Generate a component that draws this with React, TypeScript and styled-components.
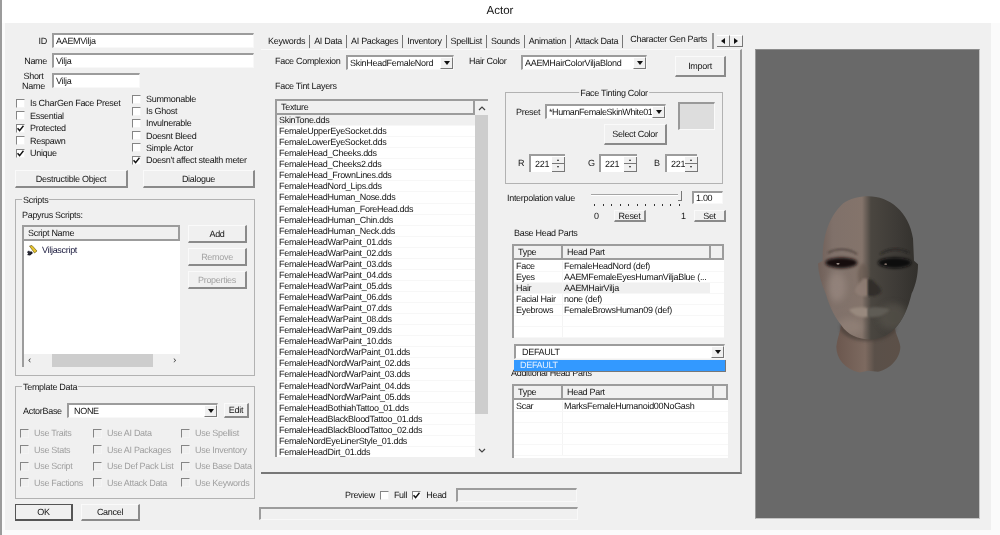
import React from "react";
import styled, {createGlobalStyle} from "styled-components";

const GlobalStyle = createGlobalStyle`
  html, body {
    margin: 0;
    background: #fff;
  }
  * {
    box-sizing: border-box;
  }
`;

const Window = styled.div`
  width: 1000px;
  height: 535px;
  overflow: hidden;
  background: #fbfbfb;
  border-left: 2px solid #9b9b9b;
  color: #161616;
  font-family: "Liberation Sans", Arial, sans-serif;
  font-size: 9px;
  line-height: 10px;
  letter-spacing: -0.3px;
  text-rendering: geometricPrecision;
  filter: blur(0.3px);
`;

const TitleBar = styled.div`
  height: 23px;
  margin-left: -2px;
  text-align: center;
  font-size: 11.5px;
  letter-spacing: 0;
  line-height: 23px;
  background: #fff;
`;

const Dialog = styled.div`
  display: flex;
  width: 986px;
  height: 507px;
  margin-left: 3px;
  padding: 10px 0 0 10px;
  background: #f0f0f0;
`;

const LeftColumn = styled.div`
  flex: none;
  width: 240px;
`;

const Row = styled.div<{$h?: number; $mt?: number; $pl?: number}>`
  display: flex;
  align-items: center;
  height: ${(p) => p.$h ?? 15}px;
  margin-top: ${(p) => p.$mt ?? 0}px;
  padding-left: ${(p) => p.$pl ?? 0}px;
`;

const FieldLabel = styled.div<{$w?: number; $right?: boolean; $center?: boolean}>`
  flex: none;
  width: ${(p) => (p.$w ? `${p.$w}px` : "auto")};
  padding-right: ${(p) => (p.$right ? 5 : 0)}px;
  text-align: ${(p) => (p.$center ? "center" : p.$right ? "right" : "left")};
`;

const Sunken = styled.div<{$w: number; $h?: number; $ml?: number; $blank?: boolean}>`
  flex: none;
  width: ${(p) => p.$w}px;
  height: ${(p) => p.$h ?? 15}px;
  margin-left: ${(p) => p.$ml ?? 0}px;
  padding: 0 0 1px 2px;
  display: flex;
  align-items: center;
  overflow: hidden;
  white-space: nowrap;
  background: ${(p) => (p.$blank ? "#f0f0f0" : "#fff")};
  border-top: 2px solid #9c9c9c;
  border-left: 2px solid #9c9c9c;
  border-right: 1px solid #f8f8f8;
  border-bottom: 1px solid #f8f8f8;
`;

const ComboText = styled.span<{$pl?: number; $tight?: boolean}>`
  flex: 1;
  overflow: hidden;
  padding-left: ${(p) => p.$pl ?? 0}px;
  letter-spacing: ${(p) => (p.$tight ? "-0.42px" : "inherit")};
`;

const ComboArrowButton = styled.span`
  flex: none;
  display: flex;
  align-items: center;
  justify-content: center;
  width: 13px;
  height: 12px;
  background: #f0f0f0;
  border-top: 1px solid #fff;
  border-left: 1px solid #fff;
  border-right: 1px solid #777;
  border-bottom: 1px solid #777;

  &::after {
    content: "";
    border-top: 4px solid #111;
    border-left: 3.5px solid transparent;
    border-right: 3.5px solid transparent;
  }
`;

const CheckColumns = styled.div`
  display: flex;
  height: 77px;
  margin-top: 5px;
`;

const CheckColumn = styled.div<{$w: number; $pt: number; $pl: number; $step: number}>`
  flex: none;
  width: ${(p) => p.$w}px;
  padding: ${(p) => p.$pt}px 0 0 ${(p) => p.$pl}px;

  & > label {
    height: ${(p) => p.$step}px;
  }
`;

const CheckLabel = styled.label<{$off?: boolean}>`
  display: flex;
  align-items: center;
  gap: 5px;
  white-space: nowrap;
  color: ${(p) => (p.$off ? "#9f9f9f" : "inherit")};
`;

const Box = styled.span<{$off?: boolean}>`
  flex: none;
  display: block;
  width: 9px;
  height: 9px;
  background: ${(p) => (p.$off ? "#f0f0f0" : "#fff")};
  border-top: 1px solid #858585;
  border-left: 1px solid #858585;
  border-right: 1px solid #f4f4f4;
  border-bottom: 1px solid #f4f4f4;

  svg {
    display: block;
  }
`;

const Check: React.FC<{label: string; on?: boolean; off?: boolean}> = ({label, on, off}) => (
  <CheckLabel $off={off}>
    <Box $off={off}>
      {on && (
        <svg width="7" height="7" viewBox="0 0 7 7">
          <path d="M0.5 3.2 L2.6 5.6 L6.5 0.8" fill="none" stroke="#111" strokeWidth="1.5" />
        </svg>
      )}
    </Box>
    {label}
  </CheckLabel>
);

const Button = styled.div<{$w: number; $h?: number; $ml?: number; $mt?: number; $off?: boolean; $default?: boolean}>`
  flex: none;
  display: flex;
  align-items: center;
  justify-content: center;
  width: ${(p) => p.$w}px;
  height: ${(p) => p.$h ?? 18}px;
  margin-left: ${(p) => p.$ml ?? 0}px;
  margin-top: ${(p) => p.$mt ?? 0}px;
  color: ${(p) => (p.$off ? "#a3a3a3" : "inherit")};
  background: #f0f0f0;
  border-top: 1px solid ${(p) => (p.$default ? "#555" : "#fafafa")};
  border-left: 1px solid ${(p) => (p.$default ? "#555" : "#fafafa")};
  border-right: 2px solid ${(p) => (p.$default ? "#555" : "#8a8a8a")};
  border-bottom: 2px solid ${(p) => (p.$default ? "#555" : "#8a8a8a")};
`;

const Group = styled.div<{$w?: number; $h: number; $mt: number; $pl: number; $pt: number}>`
  position: relative;
  width: ${(p) => p.$w ?? 240}px;
  height: ${(p) => p.$h}px;
  margin-top: ${(p) => p.$mt}px;
  padding: ${(p) => p.$pt}px 0 0 ${(p) => p.$pl}px;
  border: 1px solid #b2b2b2;
`;

const Legend = styled.div<{$center?: boolean}>`
  position: absolute;
  top: -5px;
  left: ${(p) => (p.$center ? "50%" : "6px")};
  transform: ${(p) => (p.$center ? "translateX(-50%)" : "none")};
  padding: 0 1px;
  white-space: nowrap;
  background: #f0f0f0;
`;

const ScriptsBody = styled.div`
  display: flex;
  gap: 8px;
  margin-top: 5px;
`;

const ScriptList = styled.div`
  display: flex;
  flex-direction: column;
  width: 158px;
  height: 142px;
  background: #fff;
  border-top: 2px solid #9c9c9c;
  border-left: 2px solid #9c9c9c;
`;

const ScriptHeader = styled.div`
  flex: none;
  display: flex;
`;

const HeaderCell = styled.div<{$w?: number; $pl?: number}>`
  flex: ${(p) => (p.$w ? "none" : 1)};
  width: ${(p) => (p.$w ? `${p.$w}px` : "auto")};
  height: 14px;
  padding-left: ${(p) => p.$pl ?? 4}px;
  line-height: 12px;
  background: #f0f0f0;
  border-right: 2px solid #9c9c9c;
  border-bottom: 2px solid #9c9c9c;
`;

const ScriptRows = styled.div`
  flex: 1;
  padding: 3px 0 0 2px;
`;

const ScriptRow = styled.div`
  display: flex;
  align-items: center;
  gap: 4px;
  height: 12px;
  color: #16163a;
`;

const HScroll = styled.div`
  flex: none;
  display: flex;
  align-items: center;
  justify-content: space-between;
  height: 13px;
  padding: 0 4px;
  background: #f0f0f0;
  color: #333;
  font-size: 10px;
`;

const HThumb = styled.div`
  width: 101px;
  height: 13px;
  margin-left: 1px;
  background: #cdcdcd;
`;

const SideButtons = styled.div`
  display: flex;
  flex-direction: column;
  gap: 5px;
`;

const TemplateGrid = styled.div`
  display: grid;
  grid-template-columns: 73px 88px 1fr;
  grid-auto-rows: 16.5px;
  align-items: center;
  margin-top: 7px;
`;

const MidColumn = styled.div`
  flex: none;
  width: 483px;
  margin-left: 4px;
`;

const TabStrip = styled.div`
  display: flex;
  align-items: center;
  height: 16px;
  padding-left: 5px;
`;

const Tab = styled.div`
  height: 13px;
  padding: 0 4px;
  margin-top: 1px;
  line-height: 13px;
  white-space: nowrap;
  border-right: 1px solid #777;
`;

const ActiveTab = styled.div`
  height: 16px;
  padding: 0 5px 0 3px;
  margin-left: 4px;
  line-height: 13px;
  white-space: nowrap;
  border-right: 2px solid #999;
`;

const ArrowPair = styled.div`
  display: flex;
  margin-left: 3px;
`;

const ArrowButton = styled.div<{$left?: boolean}>`
  display: flex;
  align-items: center;
  justify-content: center;
  width: 13px;
  height: 12px;
  background: #f0f0f0;
  border-right: 1px solid #777;
  border-bottom: 1px solid #777;
  border-top: 1px solid #fff;

  &::after {
    content: "";
    border-top: 3px solid transparent;
    border-bottom: 3px solid transparent;
    ${(p) => (p.$left ? "border-right: 4px solid #111;" : "border-left: 4px solid #111;")}
  }
`;

const TabPanel = styled.div`
  width: 481px;
  height: 425px;
  margin-left: 2px;
  padding: 5px 0 0 14px;
  border-top: 1px solid #fafafa;
  border-right: 2px solid #999;
  border-bottom: 2px solid #777;
`;

const TopFields = styled.div`
  display: flex;
  align-items: flex-start;
  height: 26px;
`;

const TopLabel = styled.div<{$w: number; $ml?: number}>`
  flex: none;
  width: ${(p) => p.$w}px;
  margin-left: ${(p) => p.$ml ?? 0}px;
  line-height: 13px;
  white-space: nowrap;
`;

const PanelBody = styled.div`
  display: flex;
`;

const TintColumn = styled.div`
  flex: none;
  width: 213px;
`;

const TintTitle = styled.div`
  height: 18px;
`;

const TintList = styled.div`
  display: flex;
  width: 213px;
  height: 358px;
  background: #fff;
  border-top: 2px solid #9c9c9c;
  border-left: 2px solid #9c9c9c;
`;

const TintRows = styled.div`
  flex: 1;
  overflow: hidden;
`;

const TintRow = styled.div<{$selected?: boolean}>`
  height: 11.07px;
  padding-left: 2px;
  line-height: 10px;
  white-space: nowrap;
  background: ${(p) => (p.$selected ? "#f0f0f0" : "#fff")};
  border-bottom: 1px solid #f7f7f7;
`;

const VScroll = styled.div`
  flex: none;
  display: flex;
  flex-direction: column;
  width: 13px;
  background: #f0f0f0;
`;

const VArrow = styled.div`
  flex: none;
  height: 14px;
  display: flex;
  align-items: center;
  justify-content: center;
`;

const VThumb = styled.div`
  width: 13px;
  height: 299px;
  background: #cdcdcd;
`;

const VTrack = styled.div`
  flex: 1;
`;

const RightColumn = styled.div`
  position: relative;
  flex: none;
  width: 221px;
  margin-left: 17px;
  padding-top: 11px;
`;

const ColorTop = styled.div`
  display: flex;
  align-items: flex-start;
`;

const PresetArea = styled.div`
  flex: none;
  width: 150px;
  padding-top: 2px;
`;

const Swatch = styled.div`
  flex: none;
  width: 37px;
  height: 28px;
  margin-left: 12px;
  background: #dddddd;
  border-top: 2px solid #999;
  border-left: 2px solid #999;
  border-right: 1px solid #fafafa;
  border-bottom: 1px solid #fafafa;
`;

const RgbRow = styled.div`
  display: flex;
  align-items: center;
  height: 18px;
  margin-top: 9px;
  padding-left: 2px;
`;

const RgbLabel = styled.div<{$ml?: number}>`
  flex: none;
  width: 11px;
  margin-left: ${(p) => p.$ml ?? 0}px;
`;

const Spinner = styled.div<{$w: number}>`
  flex: none;
  display: flex;
  align-items: center;
  width: ${(p) => p.$w}px;
  height: 18px;
  padding-left: 4px;
  background: #fff;
  border-top: 2px solid #9c9c9c;
  border-left: 2px solid #9c9c9c;
`;

const SpinValue = styled.div`
  flex: 1;
`;

const SpinButtons = styled.div`
  flex: none;
  display: flex;
  flex-direction: column;
  width: 13px;
  height: 15px;
`;

const SpinButton = styled.div<{$down?: boolean}>`
  flex: 1;
  display: flex;
  align-items: center;
  justify-content: center;
  background: #f0f0f0;
  border-right: 1px solid #777;
  border-bottom: 1px solid #777;

  &::after {
    content: "";
    border-left: 1.5px solid transparent;
    border-right: 1.5px solid transparent;
    ${(p) => (p.$down ? "border-top: 2px solid #222;" : "border-bottom: 2px solid #222;")}
  }
`;

const InterpRow = styled.div`
  display: flex;
  height: 16px;
  margin-top: 7px;
  padding-left: 2px;
`;

const InterpLabel = styled.div`
  flex: none;
  width: 84px;
  line-height: 14px;
`;

const Slider = styled.div`
  position: relative;
  flex: none;
  width: 91px;
  height: 16px;
  margin-right: 10px;
`;

const SliderTrack = styled.div`
  position: absolute;
  top: 3px;
  left: 0;
  width: 100%;
  height: 2px;
  background: #a5a5a5;
  border-bottom: 1px solid #fff;
`;

const SliderTicks = styled.div`
  position: absolute;
  top: 13px;
  left: 3px;
  width: 86px;
  height: 2px;
  background: repeating-linear-gradient(to right, #333 0 1px, transparent 1px 8.5px);
`;

const SliderThumb = styled.div`
  position: absolute;
  top: 0;
  right: 0;
  width: 4px;
  height: 10px;
  background: #f0f0f0;
  border-right: 1px solid #777;
  border-bottom: 1px solid #777;
`;

const ScaleRow = styled.div`
  display: flex;
  align-items: center;
  height: 12px;
  margin-top: 3px;
  padding-left: 89px;
`;

const ScaleMark = styled.div<{$w: number; $ml?: number}>`
  flex: none;
  width: ${(p) => p.$w}px;
  margin-left: ${(p) => p.$ml ?? 0}px;
`;

const SectionTitle = styled.div<{$mt: number; $pl: number}>`
  height: 10px;
  margin-top: ${(p) => p.$mt}px;
  padding-left: ${(p) => p.$pl}px;
`;

const PartsTable = styled.div<{$w: number; $h: number}>`
  width: ${(p) => p.$w}px;
  height: ${(p) => p.$h}px;
  margin: 6px 0 0 7px;
  overflow: hidden;
  background: #fff;
  border-top: 2px solid #9c9c9c;
  border-left: 2px solid #9c9c9c;
`;

const PartsHeader = styled.div`
  display: flex;
`;

const PartRow = styled.div<{$selected?: boolean}>`
  display: flex;
  height: 11px;
  line-height: 10px;
  background: linear-gradient(to right, ${(p) => (p.$selected ? "#f0f0f0, #f0f0f0 196px, #fff 196px" : "#fff, #fff")});
  border-bottom: 1px solid #f7f7f7;
`;

const PartsSpacer = styled.div`
  height: 1px;
`;

const PartType = styled.div`
  flex: none;
  width: 49px;
  padding-left: 2px;
  white-space: nowrap;
  border-right: 1px solid #f4f4f4;
`;

const PartName = styled.div`
  flex: 1;
  padding-left: 1px;
  white-space: nowrap;
`;

const DropList = styled.div`
  position: absolute;
  top: 279px;
  left: 9px;
  width: 212px;
  height: 12px;
  padding-left: 6px;
  color: #e8f2ff;
  line-height: 11px;
  background: #3399ff;
  border-bottom: 1px solid #777;
  border-right: 1px solid #777;
`;

const PreviewRow = styled.div`
  display: flex;
  align-items: center;
  gap: 5px;
  height: 14px;
  margin-top: 14px;
  padding-left: 86px;
`;

const StatusField = styled(Sunken)`
  margin-top: 5px;
`;

const PreviewPane = styled.div`
  flex: none;
  display: flex;
  align-items: center;
  justify-content: center;
  width: 225px;
  height: 470px;
  margin: 16px 0 0 13px;
  background: #696969;
  border-top: 1px solid #8c8c8c;
  border-left: 1px solid #9a9a9a;
  border-right: 1px solid #c4c4c4;
  border-bottom: 1px solid #c4c4c4;
`;

const tintRows = [
  "SkinTone.dds",
  "FemaleUpperEyeSocket.dds",
  "FemaleLowerEyeSocket.dds",
  "FemaleHead_Cheeks.dds",
  "FemaleHead_Cheeks2.dds",
  "FemaleHead_FrownLines.dds",
  "FemaleHeadNord_Lips.dds",
  "FemaleHeadHuman_Nose.dds",
  "FemaleHeadHuman_ForeHead.dds",
  "FemaleHeadHuman_Chin.dds",
  "FemaleHeadHuman_Neck.dds",
  "FemaleHeadWarPaint_01.dds",
  "FemaleHeadWarPaint_02.dds",
  "FemaleHeadWarPaint_03.dds",
  "FemaleHeadWarPaint_04.dds",
  "FemaleHeadWarPaint_05.dds",
  "FemaleHeadWarPaint_06.dds",
  "FemaleHeadWarPaint_07.dds",
  "FemaleHeadWarPaint_08.dds",
  "FemaleHeadWarPaint_09.dds",
  "FemaleHeadWarPaint_10.dds",
  "FemaleHeadNordWarPaint_01.dds",
  "FemaleHeadNordWarPaint_02.dds",
  "FemaleHeadNordWarPaint_03.dds",
  "FemaleHeadNordWarPaint_04.dds",
  "FemaleHeadNordWarPaint_05.dds",
  "FemaleHeadBothiahTattoo_01.dds",
  "FemaleHeadBlackBloodTattoo_01.dds",
  "FemaleHeadBlackBloodTattoo_02.dds",
  "FemaleNordEyeLinerStyle_01.dds",
  "FemaleHeadDirt_01.dds",
];

const baseParts = [
  ["Face", "FemaleHeadNord (def)"],
  ["Eyes", "AAEMFemaleEyesHumanViljaBlue (..."],
  ["Hair", "AAEMHairVilja"],
  ["Facial Hair", "none (def)"],
  ["Eyebrows", "FemaleBrowsHuman09 (def)"],
  ["", ""],
  ["", ""],
];

const extraParts = [
  ["Scar", "MarksFemaleHumanoid00NoGash"],
  ["", ""],
  ["", ""],
  ["", ""],
  ["", ""],
];

const tabs = ["Keywords", "AI Data", "AI Packages", "Inventory", "SpellList", "Sounds", "Animation", "Attack Data"];

const Combo: React.FC<{text: string; w: number; pl?: number; tight?: boolean}> = ({text, w, pl, tight}) => (
  <Sunken $w={w}>
    <ComboText $pl={pl} $tight={tight}>{text}</ComboText>
    <ComboArrowButton />
  </Sunken>
);

const ScriptIcon = () => (
  <svg width="12" height="11" viewBox="0 0 12 11">
    <path d="M1 10 L5 6 L7 8 L4 10.5 Z" fill="#17171f" />
    <path d="M3.5 1 L6 0.5 L11 6 L8.5 8 Z" fill="#e8c62c" stroke="#5a4a10" strokeWidth="0.6" />
    <path d="M1 7 L3 5.5 L5 8 L3 10 Z" fill="#2b2b36" />
  </svg>
);

const Head = () => (
  <svg width="100" height="177" viewBox="205 498 300 530">
    <defs>
      <linearGradient id="skin" x1="205" y1="0" x2="505" y2="0" gradientUnits="userSpaceOnUse">
        <stop offset="0" stopColor="#6f5f58" />
        <stop offset="0.15" stopColor="#80716a" />
        <stop offset="0.44" stopColor="#84746b" />
        <stop offset="0.53" stopColor="#4a4640" />
        <stop offset="0.8" stopColor="#3d3a36" />
        <stop offset="1" stopColor="#32302c" />
      </linearGradient>
      <linearGradient id="neck" x1="260" y1="0" x2="452" y2="0" gradientUnits="userSpaceOnUse">
        <stop offset="0" stopColor="#6b574e" />
        <stop offset="0.45" stopColor="#7d6a60" />
        <stop offset="0.6" stopColor="#5a5049" />
        <stop offset="1" stopColor="#5c5048" />
      </linearGradient>
      <clipPath id="face">
        <path d="M355 498 C420 498 478 545 490 625 L493 692 L505 702 C505 735 498 765 486 790 C475 835 460 870 435 896 C405 925 375 930 355 928 C325 925 295 915 275 885 C250 855 235 815 228 790 C215 760 206 730 205 700 L219 692 C218 630 232 565 280 520 C300 505 330 498 355 498 Z" />
      </clipPath>
      <filter id="wide" x="-50%" y="-50%" width="200%" height="200%">
        <feGaussianBlur stdDeviation="9" />
      </filter>
      <filter id="soft" x="-30%" y="-50%" width="160%" height="200%">
        <feGaussianBlur stdDeviation="5" />
      </filter>
      <filter id="softer" x="-30%" y="-30%" width="160%" height="160%">
        <feGaussianBlur stdDeviation="3" />
      </filter>
    </defs>
    <path
      d="M275 880 C272 905 262 925 260 950 C260 985 285 1018 330 1027 L355 1022 L385 1025 C420 1018 452 985 452 950 C450 930 438 915 435 890 Z"
      fill="url(#neck)"
    />
    <path d="M272 900 C300 945 410 945 438 900 L438 880 L272 880 Z" fill="#3f3733" opacity="0.55" filter="url(#soft)" />
    <path
      d="M355 498 C420 498 478 545 490 625 L493 692 L505 702 C505 735 498 765 486 790 C475 835 460 870 435 896 C405 925 375 930 355 928 C325 925 295 915 275 885 C250 855 235 815 228 790 C215 760 206 730 205 700 L219 692 C218 630 232 565 280 520 C300 505 330 498 355 498 Z"
      fill="url(#skin)"
    />
    <g clipPath="url(#face)">
      <ellipse cx="262" cy="770" rx="28" ry="45" fill="#a29289" opacity="0.5" filter="url(#wide)" />
      <ellipse cx="430" cy="860" rx="45" ry="40" fill="#57534c" opacity="0.7" filter="url(#wide)" />
      <ellipse cx="300" cy="890" rx="40" ry="25" fill="#9a8a80" opacity="0.5" filter="url(#wide)" />
      <ellipse cx="340" cy="735" rx="15" ry="35" fill="#615248" opacity="0.55" filter="url(#soft)" />
      <ellipse cx="275" cy="698" rx="48" ry="16" fill="#120e0f" filter="url(#soft)" />
      <ellipse cx="435" cy="698" rx="50" ry="16" fill="#0f0c0d" filter="url(#soft)" />
      <path d="M235 668 C262 652 300 655 322 672" fill="none" stroke="#3f3530" strokeWidth="3.5" filter="url(#softer)" />
      <path d="M392 672 C415 655 450 652 478 668" fill="none" stroke="#211e1c" strokeWidth="3.5" filter="url(#softer)" />
      <ellipse cx="265" cy="701" rx="5" ry="2.5" fill="#a89b93" />
      <ellipse cx="408" cy="702" rx="4" ry="2.5" fill="#7d6e66" />
      <path d="M340 745 C330 760 315 770 316 785 C325 800 345 800 355 797 L355 745 Z" fill="#8f7e74" opacity="0.9" filter="url(#softer)" />
      <path d="M370 750 C380 765 395 770 395 785 C385 798 365 800 355 797 L355 745 Z" fill="#302d2a" filter="url(#softer)" />
      <path d="M298 838 C320 830 345 830 355 835 L355 860 C335 864 312 858 298 838 Z" fill="#98897e" filter="url(#softer)" />
      <path d="M355 835 C370 830 395 830 420 838 C405 858 375 864 355 860 Z" fill="#5f5b54" filter="url(#softer)" />
    </g>
  </svg>
);

const App: React.FC = () => {
  return (
    <>
      <GlobalStyle />
      <Window>
        <TitleBar>Actor</TitleBar>
        <Dialog>
          <LeftColumn>
            <Row>
              <FieldLabel $w={37} $right>ID</FieldLabel>
              <Sunken $w={202}>AAEMVilja</Sunken>
            </Row>
            <Row $mt={5}>
              <FieldLabel $w={37} $right>Name</FieldLabel>
              <Sunken $w={202}>Vilja</Sunken>
            </Row>
            <Row $mt={5}>
              <FieldLabel $w={37} $center>Short Name</FieldLabel>
              <Sunken $w={88}>Vilja</Sunken>
            </Row>
            <CheckColumns>
              <CheckColumn $w={116} $pt={4} $pl={1} $step={12.5}>
                <Check label="Is CharGen Face Preset" />
                <Check label="Essential" />
                <Check label="Protected" on />
                <Check label="Respawn" />
                <Check label="Unique" on />
              </CheckColumn>
              <CheckColumn $w={124} $pt={0} $pl={1} $step={12.2}>
                <Check label="Summonable" />
                <Check label="Is Ghost" />
                <Check label="Invulnerable" />
                <Check label="Doesnt Bleed" />
                <Check label="Simple Actor" />
                <Check label="Doesn't affect stealth meter" on />
              </CheckColumn>
            </CheckColumns>
            <Row $h={18}>
              <Button $w={113}>Destructible Object</Button>
              <Button $w={112} $ml={15}>Dialogue</Button>
            </Row>
            <Group $h={177} $mt={11} $pl={6} $pt={10}>
              <Legend>Scripts</Legend>
              Papyrus Scripts:
              <ScriptsBody>
                <ScriptList>
                  <ScriptHeader>
                    <HeaderCell>Script Name</HeaderCell>
                  </ScriptHeader>
                  <ScriptRows>
                    <ScriptRow>
                      <ScriptIcon />
                      Viljascript
                    </ScriptRow>
                  </ScriptRows>
                  <HScroll>
                    ‹<HThumb />›
                  </HScroll>
                </ScriptList>
                <SideButtons>
                  <Button $w={59}>Add</Button>
                  <Button $w={59} $off>Remove</Button>
                  <Button $w={59} $off>Properties</Button>
                </SideButtons>
              </ScriptsBody>
            </Group>
            <Group $h={113} $mt={10} $pl={4} $pt={16}>
              <Legend>Template Data</Legend>
              <Row $pl={3}>
                <FieldLabel $w={44}>ActorBase</FieldLabel>
                <Combo text="NONE" w={151} pl={3} />
                <Button $w={25} $h={15} $ml={6}>Edit</Button>
              </Row>
              <TemplateGrid>
                <Check off label="Use Traits" />
                <Check off label="Use AI Data" />
                <Check off label="Use Spellist" />
                <Check off label="Use Stats" />
                <Check off label="Use AI Packages" />
                <Check off label="Use Inventory" />
                <Check off label="Use Script" />
                <Check off label="Use Def Pack List" />
                <Check off label="Use Base Data" />
                <Check off label="Use Factions" />
                <Check off label="Use Attack Data" />
                <Check off label="Use Keywords" />
              </TemplateGrid>
            </Group>
            <Row $h={17} $mt={5}>
              <Button $w={58} $h={17} $default>OK</Button>
              <Button $w={59} $h={17} $ml={8}>Cancel</Button>
            </Row>
          </LeftColumn>

          <MidColumn>
            <TabStrip>
              {tabs.map((t) => (
                <Tab key={t}>{t}</Tab>
              ))}
              <ActiveTab>Character Gen Parts</ActiveTab>
              <ArrowPair>
                <ArrowButton $left />
                <ArrowButton />
              </ArrowPair>
            </TabStrip>
            <TabPanel>
              <TopFields>
                <TopLabel $w={71}>Face Complexion</TopLabel>
                <Combo text="SkinHeadFemaleNord" w={108} />
                <TopLabel $w={52} $ml={15}>Hair Color</TopLabel>
                <Combo text="AAEMHairColorViljaBlond" w={126} />
                <Button $w={51} $h={21} $ml={28} $mt={1}>Import</Button>
              </TopFields>
              <PanelBody>
                <TintColumn>
                  <TintTitle>Face Tint Layers</TintTitle>
                  <TintList>
                    <TintRows>
                      <HeaderCell>Texture</HeaderCell>
                      {tintRows.map((name, i) => (
                        <TintRow key={name} $selected={i === 0}>{name}</TintRow>
                      ))}
                    </TintRows>
                    <VScroll>
                      <VArrow>
                        <svg width="8" height="5" viewBox="0 0 8 5">
                          <path d="M1 4 L4 1 L7 4" fill="none" stroke="#444" strokeWidth="1.2" />
                        </svg>
                      </VArrow>
                      <VThumb />
                      <VTrack />
                      <VArrow>
                        <svg width="8" height="5" viewBox="0 0 8 5">
                          <path d="M1 1 L4 4 L7 1" fill="none" stroke="#444" strokeWidth="1.2" />
                        </svg>
                      </VArrow>
                    </VScroll>
                  </TintList>
                </TintColumn>
                <RightColumn>
                  <Group $w={218} $h={92} $mt={0} $pl={10} $pt={9}>
                    <Legend $center>Face Tinting Color</Legend>
                    <ColorTop>
                      <PresetArea>
                        <Row>
                          <FieldLabel $w={29}>Preset</FieldLabel>
                          <Combo text="*HumanFemaleSkinWhite01" w={121} tight />
                        </Row>
                        <Button $w={63} $h={21} $ml={88} $mt={5}>Select Color</Button>
                      </PresetArea>
                      <Swatch />
                    </ColorTop>
                    <RgbRow>
                      <RgbLabel>R</RgbLabel>
                      <Spinner $w={36}>
                        <SpinValue>221</SpinValue>
                        <SpinButtons><SpinButton /><SpinButton $down /></SpinButtons>
                      </Spinner>
                      <RgbLabel $ml={23}>G</RgbLabel>
                      <Spinner $w={38}>
                        <SpinValue>221</SpinValue>
                        <SpinButtons><SpinButton /><SpinButton $down /></SpinButtons>
                      </Spinner>
                      <RgbLabel $ml={17}>B</RgbLabel>
                      <Spinner $w={32}>
                        <SpinValue>221</SpinValue>
                        <SpinButtons><SpinButton /><SpinButton $down /></SpinButtons>
                      </Spinner>
                    </RgbRow>
                  </Group>
                  <InterpRow>
                    <InterpLabel>Interpolation value</InterpLabel>
                    <Slider>
                      <SliderTrack />
                      <SliderTicks />
                      <SliderThumb />
                    </Slider>
                    <Sunken $w={31} $h={13}>1.00</Sunken>
                  </InterpRow>
                  <ScaleRow>
                    <ScaleMark $w={20}>0</ScaleMark>
                    <Button $w={32} $h={12}>Reset</Button>
                    <ScaleMark $w={13} $ml={35}>1</ScaleMark>
                    <Button $w={32} $h={12}>Set</Button>
                  </ScaleRow>
                  <SectionTitle $mt={6} $pl={9}>Base Head Parts</SectionTitle>
                  <PartsTable $w={212} $h={94}>
                    <PartsHeader>
                      <HeaderCell $w={49} $pl={4}>Type</HeaderCell>
                      <HeaderCell $w={148} $pl={4}>Head Part</HeaderCell>
                      <HeaderCell />
                    </PartsHeader>
                    <PartsSpacer />
                    {baseParts.map(([type, part], i) => (
                      <PartRow key={i} $selected={type === "Hair"}>
                        <PartType>{type}</PartType>
                        <PartName>{part}</PartName>
                      </PartRow>
                    ))}
                  </PartsTable>
                  <Row $mt={6} $pl={9}>
                    <Combo text="DEFAULT" w={211} pl={4} />
                  </Row>
                  <SectionTitle $mt={9} $pl={6}>Additional Head Parts</SectionTitle>
                  <PartsTable $w={216} $h={74}>
                    <PartsHeader>
                      <HeaderCell $w={49} $pl={4}>Type</HeaderCell>
                      <HeaderCell $w={151} $pl={4}>Head Part</HeaderCell>
                      <HeaderCell />
                    </PartsHeader>
                    <PartsSpacer />
                    {extraParts.map(([type, part], i) => (
                      <PartRow key={i}>
                        <PartType>{type}</PartType>
                        <PartName>{part}</PartName>
                      </PartRow>
                    ))}
                  </PartsTable>
                  <DropList>DEFAULT</DropList>
                </RightColumn>
              </PanelBody>
            </TabPanel>
            <PreviewRow>
              Preview
              <Check label="Full" />
              <Check label="Head" on />
              <Sunken $w={121} $h={14} $ml={4} $blank />
            </PreviewRow>
            <StatusField $w={319} $h={13} $blank />
          </MidColumn>

          <PreviewPane>
            <Head />
          </PreviewPane>
        </Dialog>
      </Window>
    </>
  );
};

export default App;
